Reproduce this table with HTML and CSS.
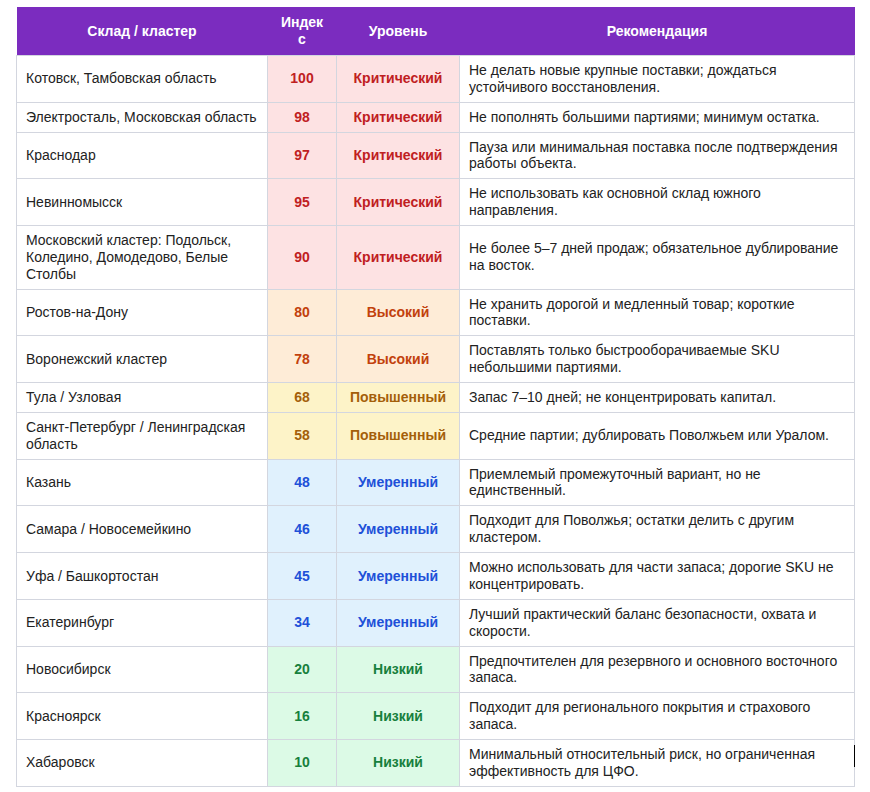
FILE: index.html
```html
<!DOCTYPE html>
<html lang="ru">
<head>
<meta charset="utf-8">
<title>Склад / кластер</title>
<link rel="stylesheet" href="styles.css">
</head>
<body>
<div class="wrap">
<table class="risk">
<colgroup>
<col class="c1"><col class="c2"><col class="c3"><col class="c4">
</colgroup>
<thead>
<tr><th>Склад / кластер</th><th>Индекс</th><th>Уровень</th><th>Рекомендация</th></tr>
</thead>
<tbody>
<tr class="crit"><td>Котовск, Тамбовская область</td><td class="n">100</td><td class="l">Критический</td><td>Не делать новые крупные поставки; дождаться устойчивого восстановления.</td></tr>
<tr class="crit"><td>Электросталь, Московская область</td><td class="n">98</td><td class="l">Критический</td><td>Не пополнять большими партиями; минимум остатка.</td></tr>
<tr class="crit"><td>Краснодар</td><td class="n">97</td><td class="l">Критический</td><td>Пауза или минимальная поставка после подтверждения работы объекта.</td></tr>
<tr class="crit"><td>Невинномысск</td><td class="n">95</td><td class="l">Критический</td><td>Не использовать как основной склад южного направления.</td></tr>
<tr class="crit"><td>Московский кластер: Подольск, Коледино, Домодедово, Белые Столбы</td><td class="n">90</td><td class="l">Критический</td><td>Не более 5–7 дней продаж; обязательное дублирование на восток.</td></tr>
<tr class="high"><td>Ростов-на-Дону</td><td class="n">80</td><td class="l">Высокий</td><td>Не хранить дорогой и медленный товар; короткие поставки.</td></tr>
<tr class="high"><td>Воронежский кластер</td><td class="n">78</td><td class="l">Высокий</td><td>Поставлять только быстрооборачиваемые SKU небольшими партиями.</td></tr>
<tr class="elev"><td>Тула / Узловая</td><td class="n">68</td><td class="l">Повышенный</td><td>Запас 7–10 дней; не концентрировать капитал.</td></tr>
<tr class="elev"><td>Санкт-Петербург / Ленинградская область</td><td class="n">58</td><td class="l">Повышенный</td><td>Средние партии; дублировать Поволжьем или Уралом.</td></tr>
<tr class="mod"><td>Казань</td><td class="n">48</td><td class="l">Умеренный</td><td>Приемлемый промежуточный вариант, но не единственный.</td></tr>
<tr class="mod"><td>Самара / Новосемейкино</td><td class="n">46</td><td class="l">Умеренный</td><td>Подходит для Поволжья; остатки делить с другим кластером.</td></tr>
<tr class="mod"><td>Уфа / Башкортостан</td><td class="n">45</td><td class="l">Умеренный</td><td>Можно использовать для части запаса; дорогие SKU не концентрировать.</td></tr>
<tr class="mod"><td>Екатеринбург</td><td class="n">34</td><td class="l">Умеренный</td><td>Лучший практический баланс безопасности, охвата и скорости.</td></tr>
<tr class="low"><td>Новосибирск</td><td class="n">20</td><td class="l">Низкий</td><td>Предпочтителен для резервного и основного восточного запаса.</td></tr>
<tr class="low"><td>Красноярск</td><td class="n">16</td><td class="l">Низкий</td><td>Подходит для регионального покрытия и страхового запаса.</td></tr>
<tr class="low"><td>Хабаровск</td><td class="n">10</td><td class="l">Низкий</td><td>Минимальный относительный риск, но ограниченная эффективность для ЦФО.</td></tr>
</tbody>
</table>
<span class="caret"></span>
</div>
</body>
</html>
```
FILE: styles.css
```css
html, body {
  margin: 0;
  padding: 0;
  background: #ffffff;
}
body {
  font-family: "Liberation Sans", Arial, sans-serif;
  font-size: 14px;
  color: #222222;
}
.wrap {
  position: relative;
  padding: 7px 0 0 16px;
  width: 838px;
}
.risk {
  width: 838px;
  border-collapse: collapse;
  table-layout: fixed;
}
.c1 { width: 251px; }
.c2 { width: 69px; }
.c3 { width: 123px; }
.c4 { width: 395px; }
.risk th {
  background: #7b2cbf;
  color: #ffffff;
  font-weight: bold;
  text-align: center;
  padding: 7px 10px;
  line-height: 17px;
  border: none;
  word-break: break-all;
}
.risk td {
  border: 1px solid #d3d6df;
  padding: 6px 9px 6.14px 9px;
  line-height: 16.8px;
  vertical-align: middle;
}
.risk td.n, .risk td.l {
  text-align: center;
  font-weight: bold;
}
.crit td.n, .crit td.l { background: #fde2e3; color: #c0201f; }
.high td.n, .high td.l { background: #feecd7; color: #c2410c; }
.elev td.n, .elev td.l { background: #fdf3c8; color: #a45f0a; }
.mod td.n, .mod td.l { background: #e0f1fd; color: #2050d8; }
.low td.n, .low td.l { background: #dcfae6; color: #17803d; }
.caret {
  position: absolute;
  left: 854px;
  top: 745px;
  width: 1px;
  height: 22px;
  background: #000000;
}
```
